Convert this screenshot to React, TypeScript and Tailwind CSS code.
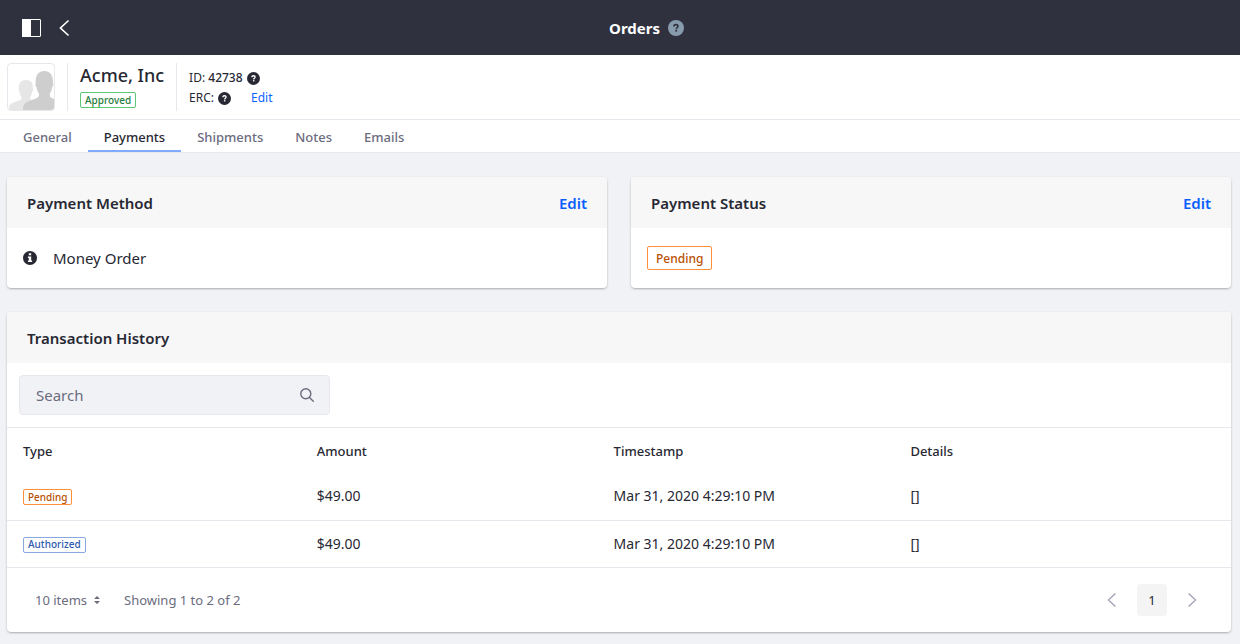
import type { ReactNode } from "react";

function QuestionIcon({ className }: { className: string }) {
  return (
    <svg viewBox="0 0 16 16" className={className} aria-hidden="true">
      <circle cx="8" cy="8" r="8" fill="currentColor" />
      <path
        d="M5.900 6.500C5.900 5.300 6.800 4.600 8 4.600s2 .7 2 1.700c0 1.400-1.800 1.500-1.800 2.900"
        fill="none"
        className="stroke-(--mark)"
        strokeWidth="1.6"
      />
      <rect x="7.300" y="10" width="1.800" height="1.600" className="fill-(--mark)" />
    </svg>
  );
}

function Chevron({ direction, className }: { direction: "left" | "right"; className: string }) {
  return (
    <svg viewBox="0 0 10 16" className={className} fill="none" stroke="currentColor" strokeLinecap="round" aria-hidden="true">
      <path d={direction === "left" ? "M9 1 1.5 8 9 15" : "M1 1l7.5 7L1 15"} />
    </svg>
  );
}

function Avatar() {
  return (
    <svg viewBox="0 0 46 46" className="size-full" aria-hidden="true">
      <path
        d="M1 46v-3c.4-2.600 2-3.700 4.500-4.600l6-2.200c1.600-.7 2.300-1.600 2-3.500-1.300-1.400-1.700-3-1.900-5-.9-.4-1.200-1.600-.8-2.900-.2-5.800 2.300-8.900 7.200-8.900 5 0 7.200 3 6.900 8.900.3 1.300 0 2.500-.8 2.900-.2 2-.7 3.600-1.900 5-.3 2 .5 3 2 3.500l6 2.200V46z"
        fill="#e6e6e6"
      />
      <path
        d="M15 46v-2.500c.5-3.500 2.700-5.300 5.500-6.300l6.500-2.500c3-1 4.400-2.300 4-5-1.500-1.700-2.100-4-2.400-6.400-1.100-.6-1.500-2-1-3.700C27.300 11 30.500 7 36.500 7s9 5 8.600 12.600c.5 1.700.1 3.100-1 3.700-.3 2.500-.9 4.700-2.400 6.400-.3 2.700.8 4.300 4.300 5V46z"
        fill="#cecece"
      />
    </svg>
  );
}

const tagColors = {
  orange: "border-[#ff8f39] text-[#b95000]",
  green: "border-[#5aca75] text-[#287d3c]",
  blue: "border-[#89a7e0] text-[#2e5aac]",
};

function Tag({ color, large, children }: { color: keyof typeof tagColors; large?: boolean; children: ReactNode }) {
  const size = large ? "h-6 px-2 pt-0.5 text-xs" : "h-4 px-1 text-[10px]";
  return (
    <span className={`inline-flex items-center rounded-xs border bg-white font-medium ${size} ${tagColors[color]}`}>
      {children}
    </span>
  );
}

function Card({ title, action, children }: { title: string; action?: string; children: ReactNode }) {
  return (
    <section className="rounded-sm bg-white shadow-[0_1px_3px_-1px_rgba(0,0,0,0.6)]">
      <header className="flex h-[51px] items-center justify-between rounded-t-sm bg-[#f7f7f7] px-5 font-semibold">
        <h2>{title}</h2>
        {action && (
          <a href="#edit" aria-label={`${action} ${title}`} className="text-[#0b5fff]">
            {action}
          </a>
        )}
      </header>
      {children}
    </section>
  );
}

const tabs = ["General", "Payments", "Shipments", "Notes", "Emails"];

const transactions: { type: string; color: "orange" | "blue" }[] = [
  { type: "Pending", color: "orange" },
  { type: "Authorized", color: "blue" },
];

export default function App() {
  return (
    <div className="min-h-screen bg-[#f1f2f5] font-['Noto_Sans','Open_Sans',sans-serif] text-[15px] leading-6 text-[#272833]">
      <header className="flex h-[55px] items-center bg-[#30313f] px-5 text-white">
        <div className="flex items-center gap-3">
          <button type="button" aria-label="Toggle menu" className="px-0.5">
            <svg viewBox="0 0 19 18" className="h-[18px] w-[19px]" aria-hidden="true">
              <rect x="0.5" y="0.5" width="18" height="17" rx="0.5" fill="none" stroke="currentColor" />
              <rect width="9" height="18" fill="currentColor" />
            </svg>
          </button>
          <button type="button" aria-label="Back" className="px-1">
            <Chevron direction="left" className="h-4 w-[10px] stroke-[1.7]" />
          </button>
        </div>
        <div className="flex flex-1 items-center justify-center gap-2">
          <h1 className="font-bold">Orders</h1>
          <button type="button" aria-label="Help">
            <QuestionIcon className="size-4 text-[#869cad] [--mark:#30313f]" />
          </button>
        </div>
      </header>

      <div className="flex h-[65px] items-center border-b border-[#e7e7ed] bg-white pl-[7px]">
        <div className="size-12 overflow-hidden rounded-sm border border-[#e7e7ed]">
          <Avatar />
        </div>
        <div className="ml-3 flex h-12 flex-col justify-between border-x border-[#e7e7ed] px-3">
          <h2 className="text-lg leading-6 font-medium">Acme, Inc</h2>
          <div className="flex pb-[3px]">
            <Tag color="green">Approved</Tag>
          </div>
        </div>
        <div className="ml-3 pt-0.5 text-xs leading-5">
          <div className="flex items-center gap-1">
            <span>
              ID: <span className="font-medium">42738</span>
            </span>
            <QuestionIcon className="size-[13px] [--mark:white]" />
          </div>
          <div className="flex items-center gap-1">
            <span>ERC:</span>
            <QuestionIcon className="size-[13px] [--mark:white]" />
            <a href="#erc" className="ml-4 text-[#0b5fff]">
              Edit
            </a>
          </div>
        </div>
      </div>

      <nav className="flex h-[33px] border-b border-[#e7e7ed] bg-white px-[7px] text-[13px]">
        {tabs.map((tab) => (
          <a
            key={tab}
            href={`#${tab.toLowerCase()}`}
            aria-current={tab === "Payments" ? "page" : undefined}
            className={`flex items-center border-b-2 px-4 pt-1 font-medium ${
              tab === "Payments" ? "border-[#80acff]" : "border-transparent text-[#6b6c7e]"
            }`}
          >
            {tab}
          </a>
        ))}
      </nav>

      <main className="flex flex-col gap-6 pt-6 pr-[9px] pb-3 pl-[7px]">
        <div className="grid grid-cols-2 gap-6">
          <Card title="Payment Method" action="Edit">
            <div className="flex h-[60px] items-center gap-4 px-4">
              <svg viewBox="0 0 14 14" className="size-[14px]" aria-hidden="true">
                <circle cx="7" cy="7" r="7" fill="currentColor" />
                <path d="M5.800 2.300h2.400v1.900H5.800zM4.900 5.500h3.300v4.100h.9v1.400H4.900V9.600h.9V6.900h-.9z" fill="white" />
              </svg>
              <span>Money Order</span>
            </div>
          </Card>
          <Card title="Payment Status" action="Edit">
            <div className="flex h-[60px] items-center px-4">
              <Tag color="orange" large>
                Pending
              </Tag>
            </div>
          </Card>
        </div>

        <Card title="Transaction History">
          <div className="border-b border-[#e7e7ed] p-3">
            <label className="flex h-10 w-[311px] items-center justify-between rounded-sm border border-[#e7e7ed] bg-[#f1f2f5] pr-[15px] pl-4">
              <input
                type="search"
                aria-label="Search"
                placeholder="Search"
                className="min-w-0 flex-1 outline-none placeholder:text-[#6b6c7e]"
              />
              <svg viewBox="0 0 14 14" className="size-[14px] text-[#6b6c7e]" fill="none" stroke="currentColor" strokeWidth="1.4" strokeLinecap="round" aria-hidden="true">
                <circle cx="5.800" cy="5.800" r="5" />
                <path d="m9.500 9.500 3.800 3.800" />
              </svg>
            </label>
          </div>
          <table className="w-full table-fixed text-left text-[13px]">
            <thead>
              <tr className="h-[45px]">
                <th className="w-[24%] px-4 font-medium">Type</th>
                <th className="px-4 font-medium">Amount</th>
                <th className="px-4 font-medium">Timestamp</th>
                <th className="w-[27.5%] px-4 font-medium">Details</th>
              </tr>
            </thead>
            <tbody className="text-sm">
              {transactions.map((row) => (
                <tr key={row.type} className="h-[47px] border-b border-[#e7e7ed]">
                  <td className="px-4">
                    <div className="flex pt-0.5">
                      <Tag color={row.color}>{row.type}</Tag>
                    </div>
                  </td>
                  <td className="px-4">$49.00</td>
                  <td className="px-4">Mar 31, 2020 4:29:10 PM</td>
                  <td className="px-4">[]</td>
                </tr>
              ))}
            </tbody>
          </table>
          <footer className="flex h-16 items-center justify-between pr-[30px] pl-7 text-[13px] text-[#6b6c7e]">
            <div className="flex items-center gap-6">
              <div className="relative flex items-center">
                <select aria-label="Items per page" className="appearance-none pr-3">
                  <option>10 items</option>
                </select>
                <svg viewBox="0 0 6 8" className="pointer-events-none absolute right-0 h-2 w-1.5" fill="currentColor" aria-hidden="true">
                  <path d="M3 0 6 3H0zM3 8 0 5h6z" />
                </svg>
              </div>
              <span>Showing 1 to 2 of 2</span>
            </div>
            <nav aria-label="Pagination" className="flex items-center gap-[17px] text-[#a7a9bc]">
              <button type="button" aria-label="Previous page" className="px-1">
                <Chevron direction="left" className="h-[14px] w-[9px] stroke-[1.6]" />
              </button>
              <button type="button" aria-current="page" className="h-8 w-[30px] rounded-sm bg-[#f4f4f4] text-[#272833]">
                1
              </button>
              <button type="button" aria-label="Next page" className="px-1">
                <Chevron direction="right" className="h-[14px] w-[9px] stroke-[1.6]" />
              </button>
            </nav>
          </footer>
        </Card>
      </main>
    </div>
  );
}
